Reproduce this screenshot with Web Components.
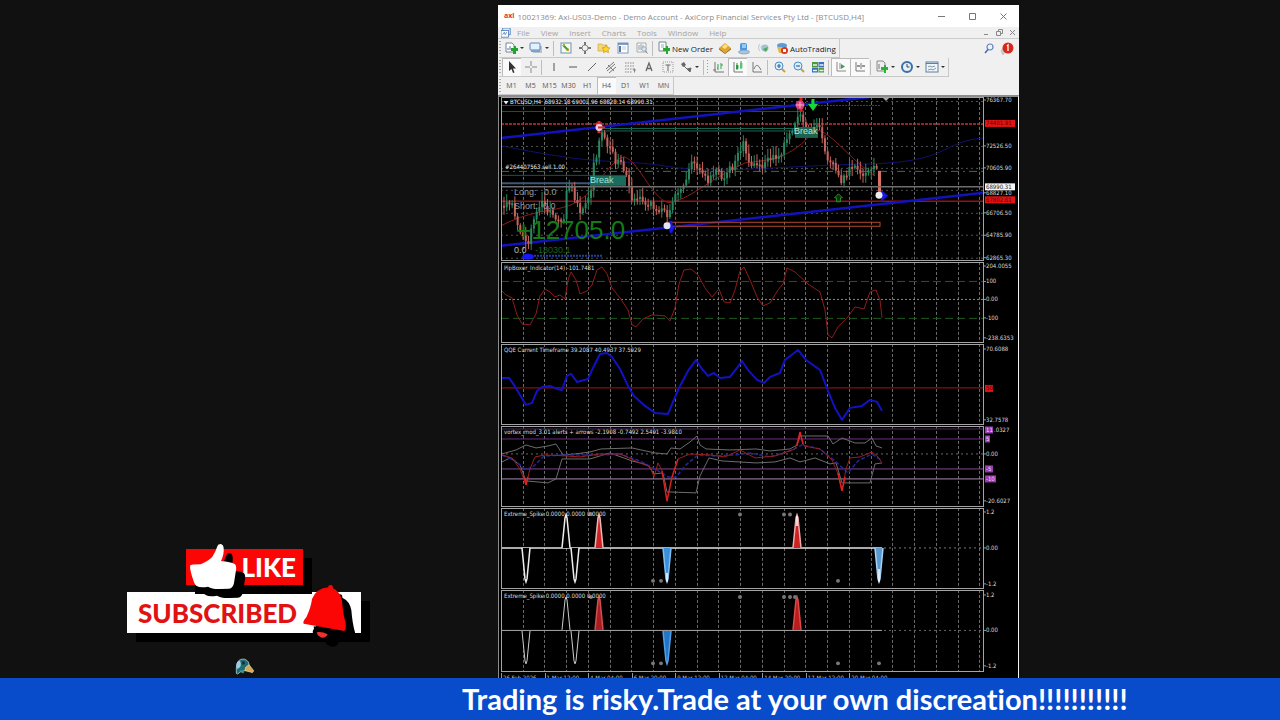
<!DOCTYPE html>
<html lang="en">
<head>
<meta charset="utf-8">
<title>Trading stream</title>
<style>
  html, body { margin: 0; height: 100%; background: #111; }
  body { font-family: "Open Sans", "Liberation Sans", sans-serif; overflow: hidden; }
</style>
</head>
<body>
<stream-stage></stream-stage>

<script>
/* ---------- toolbar icons, 12 x 12 ---------- */
const ICONS = {
  newchart: '<path d="M1 1h6l2 2v7H1z" fill="#fff" stroke="#789"/><path d="M3 6v2M5 4v4" stroke="#579"/><path d="M6 6h3V4h2v2h2v3h-2v3H8V9H6z" fill="#1fa52f"/>',
  profiles: '<rect x="3" y="4" width="9" height="7" fill="#b9c3cc"/><rect x="0" y="1" width="10" height="7" rx="1" fill="#e6f0fb" stroke="#5586c4"/><path d="M1 9h9" stroke="#7aa2d0" stroke-width="2"/>',
  market: '<rect x="1" y="1" width="10" height="10" fill="#f4f9ea" stroke="#6b93b8"/><path d="M3 3l5 5" stroke="#3b9b3b" stroke-width="2"/><path d="M6 9h3V6z" fill="#c99a30"/><path d="M3 3h2" stroke="#c99a30" stroke-width="2"/>',
  target: '<circle cx="6" cy="6" r="3" fill="none" stroke="#888"/><path d="M6 0v3M6 9v3M0 6h3M9 6h3" stroke="#777" stroke-width="2"/>',
  star: '<path d="M0 2h4l1 1h4v6H0z" fill="#f2d776" stroke="#c9a238" stroke-width=".6"/><path d="M8 3l1.300 2.500 2.700.4-2 1.900.5 2.900L8 9.500l-2.500 1.200.5-2.900-2-1.900 2.700-.4z" fill="#ffd42f" stroke="#b98a14" stroke-width=".6"/>',
  terminal: '<rect x="1" y="1" width="10" height="10" fill="#fff" stroke="#7b9cc8"/><path d="M1 2h10" stroke="#5b82b8" stroke-width="1.500"/><path d="M3 4v6" stroke="#346" stroke-width="1.500"/><path d="M5 5h4M5 7h4" stroke="#bcd"/>',
  tester: '<path d="M1 1h9v9H1z" fill="#f7f7f7" stroke="#aaa"/><path d="M3 3v5M5 2v6M7 3v3" stroke="#8c9cac"/><circle cx="8" cy="7" r="2.200" fill="#dde8f2" stroke="#9ab"/><path d="M9.500 9l2 2.500" stroke="#789"/>',
  order: '<path d="M1 0h7v9H1z" fill="#fff" stroke="#789"/><path d="M3 3h3M3 5h3" stroke="#9ab"/><path d="M5 6h3V4h2v2h2v3h-2v3H8V9H5z" fill="#27a836"/>',
  meta: '<path d="M6 1l6 5-6 5-6-5z" fill="#e2a52c"/><path d="M0 6l6 5 6-5v1.500L6 12 0 7.500z" fill="#9a6a10"/><path d="M3 5l3-3 3 2-3 3z" fill="#ffe08a"/>',
  hosting: '<rect x="2" y="1" width="7" height="8" rx="2" fill="#4f97dc"/><path d="M4 3h4M4 5h4" stroke="#dff"/><ellipse cx="6" cy="10" rx="5.500" ry="2" fill="#a9c4dd" stroke="#6d92b5" stroke-width=".6"/>',
  signal: '<path d="M3 2a5 5 0 0 0 0 7M5 3.500a3 3 0 0 0 0 4" fill="none" stroke="#b6c6d4"/><circle cx="8" cy="6" r="3.500" fill="#a3bfd0"/><path d="M6 7l3 3 2-5z" fill="#42ab55"/>',
  auto: '<ellipse cx="6" cy="3.500" rx="5" ry="2.500" fill="#5d9bd4"/><path d="M1 5h10l-2 6H3z" fill="#e5b84d"/><circle cx="8.500" cy="8.500" r="3.500" fill="#d8371e"/><rect x="7" y="7" width="3" height="3" fill="#fff"/>',
  search: '<circle cx="7" cy="4" r="3" fill="#eef4ff" stroke="#6480bc" stroke-width="1.200"/><path d="M5 6.500L2 10" stroke="#4468b0" stroke-width="1.500"/>',
  alert: '<path d="M-1 8l2-3 2 4-2 3z" fill="#ccc" stroke="#aaa" stroke-width=".5"/><circle cx="6" cy="5" r="5.500" fill="#d9281a"/><path d="M5 3l1-1v6" stroke="#fff" stroke-width="1.300" fill="none"/>',
  cursor: '<path d="M3 0v10l2.500-2 1.500 4 1.500-.6L7 7.500h3z" fill="#333"/>',
  cross: '<path d="M6 0v5M6 7v5M0 6h5M7 6h5" stroke="#888"/>',
  vline: '<path d="M6 2v8" stroke="#555"/>',
  hline: '<path d="M2 6h8" stroke="#555"/>',
  tline: '<path d="M2 10l8-8" stroke="#666"/>',
  channel: '<path d="M1 8l8-7M2 10l8-7M4 12l7-6M3 4l6 6" stroke="#777"/>',
  fibo: '<path d="M1 2h10M1 5h10M1 8h10M1 11h7" stroke="#888" stroke-dasharray="1.500 1"/><path d="M9 9h3M10.500 7.500v4" stroke="#888"/>',
  texta: '<path d="M3 10L6 2l3 8M4 7.500h4" fill="none" stroke="#666" stroke-width="1.300"/>',
  label: '<rect x="1" y="1" width="10" height="10" fill="none" stroke="#999" stroke-dasharray="1 1"/><path d="M3.500 4h5M6 4v6" stroke="#666"/>',
  shapes: '<path d="M1 3l3-2 2 3-3 2z" fill="#666"/><path d="M4 5l5 5M7 8l4-1-1 4z" fill="#666" stroke="#666"/>',
  bars: '<path d="M2 1v10h9M0 9h3" fill="none" stroke="#777"/><path d="M5 3v6M8 2v6M4 7h1M8 4h2" stroke="#38a04c"/>',
  candles: '<path d="M2 1v10h9" fill="none" stroke="#777"/><path d="M5 2v7M9 0v8" stroke="#2c9a40"/><rect x="4" y="4" width="2.400" height="4" fill="#2c9a40"/><rect x="8" y="2" width="2.400" height="5" fill="#5cc46c"/>',
  line: '<path d="M2 1v10h9" fill="none" stroke="#777"/><path d="M3 8c2-5 4-5 7 1" fill="none" stroke="#777"/>',
  zin: '<path d="M8 8l3 3" stroke="#c9a13c" stroke-width="2"/><circle cx="5" cy="5" r="4" fill="#dceefb" stroke="#4c8cc4"/><path d="M3 5h4M5 3v4" stroke="#2e6da8" stroke-width="1.200"/>',
  zout: '<path d="M8 8l3 3" stroke="#c9a13c" stroke-width="2"/><circle cx="5" cy="5" r="4" fill="#dceefb" stroke="#4c8cc4"/><path d="M3 5h4" stroke="#2e6da8" stroke-width="1.200"/>',
  tile: '<rect x="0" y="1" width="6" height="5" fill="#4c9a3b"/><rect x="6.500" y="1" width="5.500" height="5" fill="#386fc0"/><rect x="0" y="6.500" width="6" height="5" fill="#386fc0"/><rect x="6.500" y="6.500" width="5.500" height="5" fill="#4c9a3b"/><path d="M1 4h4M7.500 4h4M1 9.500h4M7.500 9.500h4" stroke="#e8f4e8" stroke-width="1.500"/>',
  scroll: '<path d="M2 1v9h9M5 2v6" fill="none" stroke="#888"/><path d="M6 3v5l4-2.500z" fill="#3f9e56"/>',
  shift: '<path d="M2 1v9h9M7 2v6" fill="none" stroke="#777"/><path d="M3 5h3M8 5h3" stroke="#777" stroke-width="1.500"/>',
  indic: '<path d="M1 0h6l2 2v8H1z" fill="#eee" stroke="#888"/><path d="M3 3v5" stroke="#777"/><path d="M5 6h3V4h2v2h2v3h-2v3H8V9H5z" fill="#27b336"/>',
  clock: '<circle cx="6" cy="6" r="5" fill="#e6f0fa" stroke="#3c6ea8" stroke-width="2"/><path d="M6 3v3h2.500" fill="none" stroke="#345"/>',
  templ: '<rect x="0" y="1" width="12" height="10" fill="#f1f6fa" stroke="#5e7f9f"/><path d="M0 2.500h12" stroke="#5e7f9f"/><path d="M2 6l2-1 2 1 3-1M2 9l3-1 2 1 3-2" stroke="#7b98a8" fill="none"/>',
  app: '<rect x="2" y="0" width="9" height="8" fill="#dbe9f8" stroke="#4b7cba"/><rect x="0" y="3" width="9" height="8" fill="#fff" stroke="#4b7cba"/><path d="M2 8l2-3 1 3 2-3" fill="none" stroke="#4b7cba"/>'
};

const define = (name, html, setup) => {
  customElements.define(name, class extends HTMLElement {
    constructor() {
      super();
      const t = document.createElement('template');
      t.innerHTML = html;
      this.attachShadow({ mode: 'open' }).append(t.content.cloneNode(true));
    }
    connectedCallback() { if (setup) setup(this, this.shadowRoot); }
  });
};

/* ---------- toolbar pieces ---------- */
define('tool-button', `
<style>
  :host { display: flex; flex: none; }
  button { all: unset; box-sizing: border-box; display: flex; align-items: center; justify-content: center; gap: 2px;
    width: 19px; color: #222; font: 8px "Open Sans", sans-serif; white-space: nowrap; }
  :host([menu]) button { width: 25px; gap: 3px; }
  :host([wide]) button { width: auto; padding: 0 3px; }
  :host([pressed]) button { background: #fafafa; box-shadow: inset 1px 1px 0 #bbb; }
  :host([period]) button { color: #555; font-size: 7px; }
  svg { width: 12px; height: 12px; flex: none; overflow: visible; }
  i { display: none; border: 2px solid transparent; border-top-color: #333; border-bottom: 0; }
  :host([menu]) i { display: block; }
</style>
<button type="button"><svg viewBox="0 0 12 12" fill="none" aria-hidden="true"></svg><slot></slot><i></i></button>`,
(el, root) => {
  const icon = el.getAttribute('icon'), svg = root.querySelector('svg');
  if (icon) { svg.innerHTML = ICONS[icon]; root.querySelector('button').title = icon; } else svg.remove();
});

define('tool-row', `
<style>
  :host { display: flex; align-items: stretch; box-sizing: border-box; height: 19px; padding-left: 1px; }
  :host([short]) { height: 18px; }
  .bar { display: flex; border-right: 1px solid #c8c8c8; border-bottom: 1px solid #c8c8c8; }
  .bar::before { content: ""; width: 2px; margin: 2px 1px 2px 0; background: repeating-linear-gradient(#aaa 0 1px, #f0f0f0 1px 3px); }
  .end { display: flex; margin-left: auto; padding-right: 2px; }
  ::slotted(hr) { width: 1px; margin: 2px 2px 1px 1px; border: 0; background: #bdbdbd; }
  ::slotted(hr.grip) { margin-right: 1px; background: repeating-linear-gradient(#999 0 1px, #f0f0f0 1px 3px); }
</style>
<div class="bar"><slot></slot></div><div class="end"><slot name="end"></slot></div>`);

define('title-bar', `
<style>
  :host { display: flex; align-items: center; height: 22px; background: #fff; color: #8c8c8c; font-size: 8px; }
  b { margin: 0 3px 0 6px; color: #d8342c; font-size: 7px; line-height: 8px; }
  span { flex: 1; white-space: nowrap; overflow: hidden; }
  button { all: unset; width: 31px; height: 22px; display: grid; place-items: center; }
  svg { width: 9px; height: 9px; fill: none; stroke: #777; }
</style>
<b>axi</b><span><slot></slot></span>
<button aria-label="Minimize"><svg viewBox="0 0 9 9"><path d="M1 4.500h7"/></svg></button>
<button aria-label="Maximize"><svg viewBox="0 0 9 9"><path d="M1.500 1.500h6v6h-6z"/></svg></button>
<button aria-label="Close"><svg viewBox="0 0 9 9"><path d="M1.500 1.500l6 6M7.500 1.500l-6 6"/></svg></button>`);

define('menu-bar', `
<style>
  :host { display: flex; align-items: center; height: 12px; background: #f0f0f0; border-bottom: 1px solid #ccc; box-sizing: border-box;
    color: #a4a4a4; font-size: 8px; line-height: 9px; }
  svg.app { width: 10px; height: 10px; margin: 0 6px 0 3px; }
  nav { display: flex; gap: 11px; flex: 1; }
  a { color: inherit; text-decoration: none; }
  button { all: unset; width: 13px; height: 11px; display: grid; place-items: center; }
  button svg { width: 7px; height: 7px; fill: none; stroke: #888; }
</style>
<svg class="app" viewBox="0 0 12 12">${ICONS.app}</svg>
<nav><a href="#file">File</a><a href="#view">View</a><a href="#insert">Insert</a><a href="#charts">Charts</a><a href="#tools">Tools</a><a href="#window">Window</a><a href="#help">Help</a></nav>
<button aria-label="Minimize chart"><svg viewBox="0 0 7 7"><path d="M1 5.500h4"/></svg></button>
<button aria-label="Restore chart"><svg viewBox="0 0 7 7"><path d="M.5 2.500h4v4h-4zM2.500 2V.5h4v4H5"/></svg></button>
<button aria-label="Close chart"><svg viewBox="0 0 7 7"><path d="M1 1l5 5M6 1L1 6"/></svg></button>`);

/* ---------- charts ---------- */
const LEFT = 501, RIGHT = 984;
const poly = (pts, color, w = 1, extra = '') =>
  `<polyline points="${pts}" fill="none" stroke="${color}" stroke-width="${w}" stroke-linejoin="round" ${extra}/>`;
const row = (y, color, w = 1, dash = '', x1 = LEFT, x2 = RIGHT) =>
  `<path d="M${x1} ${y}H${x2}" stroke="${color}" stroke-width="${w}" ${dash && `stroke-dasharray="${dash}"`}/>`;
const columns = (y1, y2) => {
  let s = '';
  for (let i = 0; i < 22; i++) s += `<path d="M${Math.floor(523 + i * 21.75) + .5} ${y1}V${y2}" stroke="#6a6a6a" stroke-dasharray="3 2"/>`;
  return s;
};

const closes = [[501,208],[506,202],[512,206],[517,226],[522,236],[527,247],[532,220],[537,206],[541,201],[546,214],[550,212],[556,218],[562,226],[566,190],[569,182],[573,196],[577,208],[580,214],[586,200],[590,194],[593,162],[597,155],[599,131],[603,140],[606,143],[611,148],[614,166],[618,161],[622,168],[626,180],[630,198],[636,196],[642,202],[650,205],[656,210],[662,207],[667,218],[671,206],[677,190],[683,184],[688,170],[692,162],[696,166],[700,173],[708,182],[712,172],[716,170],[721,180],[726,170],[732,167],[736,156],[742,143],[746,158],[750,165],[760,166],[768,160],[780,155],[786,136],[792,128],[799,113],[803,126],[812,129],[818,126],[823,148],[828,161],[834,167],[839,183],[845,175],[852,165],[858,171],[862,179],[868,170],[873,169],[878,171]];
const priceAt = x => {
  for (let i = 1; i < closes.length; i++) if (x <= closes[i][0]) {
    const [a, b] = closes[i - 1], [c, d] = closes[i];
    return b + (d - b) * (x - a) / (c - a);
  }
  return 171;
};
const candles = () => {
  let s = '', prev = 206, n = 7;
  for (let x = 503; x <= 877; x += 2.72) {
    n = (n * 73 + 41) % 101;
    const y = priceAt(x) + (n % 7 - 3), up = y < prev;
    const top = Math.min(y, prev), h = Math.max(2, Math.abs(y - prev)), c = up ? '#2a8860' : '#c4645c';
    s += `<path d="M${x + 1} ${top - 2 - n % 8}V${top + h + 2 + n % 6}" stroke="${c}" stroke-width="1"/><rect x="${x}" y="${top}" width="2" height="${h}" fill="${c}"/>`;
    prev = y;
  }
  return s + '<rect x="878" y="171" width="3" height="21" fill="#d87068"/>';
};
const spike = (x, base, tip, color, fill, w = 1.5) =>
  `<path d="M${x - 4} ${base}L${x - 1} ${tip + Math.sign(base - tip) * 3}L${x} ${tip}L${x + 1} ${tip + Math.sign(base - tip) * 3}L${x + 4} ${base}" fill="${fill}" stroke="${color}" stroke-width="${w}"/>`;
const dots = list => list.map(([x, y]) => `<circle cx="${x}" cy="${y}" r="2" fill="#777"/>`).join('');

const PANES = {
  price: {
    y: 97, h: 164,
    draw: () => [101, 146, 168, 190, 213, 235, 258].map(y => row(y + .5, '#505050', 1, '2 3')).join('') + columns(97, 261)
      + row(105.5, '#145448', 1, '', 501, 798) + row(111.5, '#145448', 1, '', 501, 800)
      + row(105.5, '#8b2424', 1, '2 1', 806, 880)
      + row(124, '#c83030', 1.500, '3 1') + row(128.5, '#1c6a56', 1, '', 601, 800) + row(131, '#1c6a56', 1, '', 601, 800)
      + row(171.5, '#3f7040', 1, '8 4 2 4') + row(175.5, '#1a5448', 1, '', 501, 626)
      + row(183.5, '#3c5878', 2, '', 501, 626) + row(201.5, '#8f1515', 1.500)
      + '<path d="M501 146C540 153 570 160 620 162S670 170 715 170S790 166 870 164S940 142 984 138" fill="none" stroke="#11116c"/>'
      + '<path d="M501 226C540 206 560 214 580 200C598 188 610 160 624 157C638 160 650 196 668 203C690 200 705 182 745 163C770 160 790 160 815 130C830 130 848 158 875 176" fill="none" stroke="#8c1a1a"/>'
      + '<path d="M501 138L870 97M501 246L984 193" stroke="#1212bc" stroke-width="2.500"/>'
      + candles() + row(187, '#6e6e6e', 1.500)
      + '<rect x="667" y="222.500" width="213" height="4" fill="none" stroke="#b5482e"/>'
      + '<rect x="590" y="176" width="36" height="10" fill="#1b6c5c"/><rect x="795" y="127" width="23" height="11" fill="#1b6450"/>'
      + '<path d="M599 121v12M596 124h6" stroke="#ee2222" stroke-width="3"/><circle cx="599" cy="127.500" r="3.500" fill="#dcd0e8"/><path d="M598 127.500h7" stroke="#ee2222" stroke-width="2"/>'
      + '<path d="M671 221v12" stroke="#1818f0" stroke-width="3"/><path d="M668 228l8-2-4 6z" fill="#1818f0"/><circle cx="667" cy="226" r="3.500" fill="#e4e4f4"/>'
      + '<path d="M801 98v14" stroke="#e01818" stroke-width="3"/><circle cx="800" cy="105" r="4.500" fill="#d8407a"/><path d="M796 105h8M800 102v6" stroke="#f8b0c8"/>'
      + '<path d="M813 99v7" stroke="#18d838" stroke-width="3"/><path d="M808 104h10l-5 7z" fill="#18d838"/>'
      + '<path d="M838.500 194l4 4h-2v4h-4v-4h-2z" fill="#081" fill-opacity=".4" stroke="#2a8a20"/>'
      + '<path d="M881 190l7 6-7 6z" fill="#1818e8"/><circle cx="879" cy="195.500" r="3.500" fill="#eee"/>'
      + '<path d="M882 97h8l-4 4z" fill="#aaa"/><path d="M503.500 101h5l-2.500 3.500z" fill="#eee"/>'
      + '<ellipse cx="528" cy="257" rx="6" ry="3" fill="#1818f0"/>' + row(256, '#2040a0', 2, '2 1', 534, 602),
    labels: [
      [9, 1, 6, '#eee', 'BTCUSD,H4&nbsp; 68932.18 69002.96 68828.14 68990.31'],
      [4, 66, 6, '#eee', '#264407563 sell 1.00'],
      [89, 78, 9, '#a8e0d4', 'Break'], [293, 29, 9, '#b8e4da', 'Break'],
      [13, 90, 9, '#9a9a9a', 'Long:&nbsp;&nbsp; 0.0'], [13, 104, 9, '#9a9a9a', 'Short:&nbsp; 0.0'],
      [15, 118, 26, '#157a15', '+12705.0'], [34, 148, 9, '#176317', '-18030.1'], [13, 148, 9, '#bbb', '0.0']],
    axis: [[100, '76367.70'], [123.5, '74401.91', 'red'], [146, '72526.50'], [168, '70605.90'], [193, '68827.10'],
      [187, '68990.31', 'white'], [200, '67802.61', 'red'], [213, '66706.50'], [235.5, '64785.90'], [258, '62865.30']]
  },
  pip: {
    y: 262, h: 81,
    draw: () => columns(262, 343) + row(281.5, '#1d5a1d', 1, '8 4') + row(318.5, '#1d5a1d', 1, '8 4') + row(299.5, '#8a8a8a', 1, '2 2')
      + poly('501,290 506,295 512,298 517,315 522,324 530,325 536,314 540,296 545,289 550,292 555,297 560,295 565,299 568,280 571,272 576,280 580,294 587,291 592,285 597,270 602,267 607,274 612,288 620,298 628,310 632,325 636,327 643,319 652,315 665,316 670,321 675,308 679,284 684,270 691,269 698,275 705,288 712,297 719,289 724,302 730,303 735,290 740,271 744,267 750,280 757,297 763,306 770,303 778,290 783,284 787,268 795,272 808,284 820,292 825,310 828,335 832,338 838,327 848,317 855,307 864,309 870,292 876,290 880,300 882,318', '#8e1c1c'),
    labels: [[3, 2, 6, '#ddd', 'PipBoxer_Indicator(14) -101.7481']],
    axis: [[266, '204.0055'], [281.5, '100'], [299.5, '0.00'], [318, '-100'], [338, '-238.6353']]
  },
  qqe: {
    y: 344, h: 82,
    draw: () => columns(344, 426) + row(388, '#a01818')
      + poly('501,378 509,378 514,385 520,395 526,405 532,403 537,391 542,387 550,386 557,389 562,390 567,376 571,374 577,382 588,379 593,368 600,354 607,353 612,357 620,369 628,386 634,396 645,406 655,413 668,414 673,402 679,388 688,371 696,360 702,369 708,376 714,373 720,378 730,377 737,368 742,361 748,370 757,380 764,383 770,377 780,373 785,360 798,350 806,360 820,370 828,391 835,408 842,420 850,408 862,406 870,400 877,402 882,411', '#1212c4', 2),
    labels: [[3, 2, 6, '#ddd', 'QQE Current Timeframe 39.2087 40.4937 37.5929']],
    axis: [[349, '70.6088'], [388.5, '50', 'red'], [420, '32.7578']]
  },
  vortex: {
    y: 427, h: 81,
    draw: () => columns(427, 508) + row(455, '#666', 1, '2 3') + row(430, '#4c2a58') + row(440, '#6a2f7a') + row(470, '#7c4a8e') + row(480, '#a98bb4')
      + poly('502,455 516,451 526,446 536,449 548,447 556,445 563,456 575,455 590,453 601,450 632,449 655,454 667,455 671,449 680,450 690,443 697,437 700,446 706,450 730,451 756,450 770,452 790,450 797,446 800,437 828,437 833,445 842,439 855,444 865,444 872,439 876,447 882,449', '#6c6c6c')
      + poly('502,463 510,459 520,466 526,482 548,484 556,480 562,460 575,460 590,460 610,454 632,462 648,466 654,475 663,474 667,493 696,494 700,477 709,459 722,462 756,464 775,463 790,459 800,463 815,459 830,465 836,464 842,484 870,484 875,465 882,464', '#6c6c6c')
      + poly('502,456 514,461 526,471 534,467 544,457 566,456 600,456 620,455 640,462 655,470 668,478 676,478 686,466 698,456 715,457 735,456 750,454 770,458 790,452 802,446 820,450 835,462 848,474 858,462 872,455 882,462', '#24249a', 1.500, 'stroke-dasharray="4 2"')
      + poly('502,456 512,459 520,470 526,486 530,470 535,458 545,456 566,457 580,458 600,455 620,455 640,464 650,468 654,478 658,464 662,472', '#a02020')
      + poly('662,472 667,502 672,478 678,460', '#d82222', 1.500)
      + poly('678,460 690,455 710,456 725,458 740,451 755,459 775,457 795,450 800,434 804,447 820,450 832,461 838,475 842,492 846,470 850,459 860,458 872,453 878,458 882,464', '#981e1e')
      + '<path d="M524 478l2 8 2-8M797 447l3-14 3 12M838 474l4 18 3-14" fill="none" stroke="#e02222" stroke-width="1.500"/>',
    labels: [[3, 2, 6, '#ddd', 'vortex_mod_3.01 alerts + arrows -2.1908 -0.7492 2.5491 -3.9810']],
    axis: [[431, '11', 'purple'], [431, '.0327', '', 10], [440, '5', 'purple'], [455, '0.00'], [470, '-5', 'purple'], [480, '-10', 'purple'], [502, '-20.6027']]
  },
  spike1: {
    y: 509, h: 81,
    draw: () => columns(509, 590) + row(549, '#e4e4e4', 1.500, '', 501, 882) + row(549, '#777', 1, '2 3', 884, 984)
      + spike(566, 549, 516, '#eee', '#000') + spike(599, 549, 516, '#e8b8b8', '#c22') + spike(797, 549, 516, '#eaa', '#c22')
      + spike(526, 549, 583, '#eee', '#000') + spike(575, 549, 583, '#eee', '#000')
      + spike(667, 549, 583, '#7fc0f0', '#3c8fdc') + spike(879, 549, 583, '#a8d4f4', '#5a9ad0')
      + '<path d="M667 574v9M879 570v13M797 517v10" stroke="#fff" stroke-width="1.500"/>'
      + dots([[740, 515.5], [784, 515.5], [790, 515.5], [591, 515], [653, 582], [661, 582], [838, 582]]),
    labels: [[3, 2, 6, '#ddd', 'Extreme_Spike 0.0000 0.0000 0.0000']],
    axis: [[513, '1.2'], [549, '0.00'], [585, '-1.2']]
  },
  spike2: {
    y: 591, h: 82,
    draw: () => columns(591, 673) + row(631.5, '#a8a8a8', 1, '', 501, 882) + row(631.5, '#666', 1, '2 3', 884, 984)
      + spike(566, 631, 598, '#ccc', '#000', 1) + spike(599, 631, 598, '#d05050', '#a81c24') + spike(797, 631, 598, '#e04848', '#b81c1c')
      + spike(526, 632, 665, '#ccc', '#000', 1) + spike(575, 632, 665, '#ccc', '#000', 1) + spike(667, 632, 665, '#4fa0e8', '#2474c4')
      + dots([[740, 598], [784, 598], [790, 598], [795, 598], [591, 598], [653, 664.5], [661, 664.5], [838, 664.5], [879, 664.5]]),
    labels: [[3, 2, 6, '#ddd', 'Extreme_Spike 0.0000 0.0000 0.0000']],
    axis: [[596, '1.2'], [631.5, '0.00'], [667, '-1.2']]
  }
};
const TAG = { red: ['#e01414', '#600'], white: ['#f4f4f4', '#222'], purple: ['#9a3cb4', '#f0d8ff'] };

define('chart-pane', `
<style>
  :host { display: grid; grid-template-columns: minmax(0, 1fr) 34px; min-height: 0; background: #000;
    font-family: "DejaVu Sans Condensed", "DejaVu Sans", sans-serif; }
  .plot { position: relative; overflow: hidden; background: #000; }
  .plot::after { content: ""; position: absolute; inset: 0; border: 1px solid #a4a4a4; }
  svg { display: block; width: 100%; height: 100%; min-height: 0; overflow: hidden; }
  .label { position: absolute; white-space: nowrap; line-height: 1.2; }
  .label.large { font-family: "Liberation Sans", sans-serif; }
  text { font-size: 6px; fill: #dcdcdc; }
</style>
<div class="plot"><svg class="lines" preserveAspectRatio="none"></svg></div><svg class="axis" preserveAspectRatio="none"></svg>`,
(el, root) => {
  const p = PANES[el.getAttribute('name')], lines = root.querySelector('.lines'), axis = root.querySelector('.axis');
  lines.setAttribute('viewBox', `${LEFT} ${p.y} ${RIGHT - LEFT} ${p.h}`);
  lines.innerHTML = p.draw();
  axis.setAttribute('viewBox', `0 ${p.y} 34 ${p.h}`);
  axis.innerHTML = p.axis.map(([y, t, tag, x = 2]) => {
    const [bg, fg] = TAG[tag] || [];
    const w = t.length > 4 ? 30 : t.length * 3 + 2;
    return (bg ? `<rect x="1" y="${y - 3.5}" width="${w}" height="7" fill="${bg}"/>` : x > 2 ? '' : `<path d="M0 ${y}h2" stroke="#999"/>`)
      + `<text x="${x}" y="${y + 2}"${fg ? ` style="fill:${fg}"` : ''}>${t}</text>`;
  }).join('');
  const plot = root.querySelector('.plot');
  for (const [x, y, size, color, text] of p.labels) {
    const s = document.createElement('span');
    s.className = size > 6 ? 'label large' : 'label';
    s.style.cssText = `left:${x}px;top:${y}px;font-size:${size}px;color:${color}`;
    s.innerHTML = text;
    plot.append(s);
  }
});

define('time-axis', `
<style>
  :host { display: grid; grid-template-columns: repeat(11, minmax(0, 43.5fr)) 38px; height: 5px; overflow: hidden; background: #000; color: #c8c8c8;
    font: 6px/7px "DejaVu Sans Condensed", sans-serif; }
  span { white-space: nowrap; padding: 1px 0 0 1px; border-left: 1px solid #999; }
</style>
<span>26 Feb 2026</span><span>1 Mar 12:00</span><span>4 Mar 04:00</span><span>6 Mar 20:00</span><span>9 Mar 12:00</span><span>12 Mar 04:00</span><span>14 Mar 20:00</span><span>17 Mar 12:00</span><span>20 Mar 04:00</span>`);

define('trading-window', `
<style>
  :host { display: flex; flex-direction: column; min-width: 0; min-height: 0; overflow: hidden; background: #f0f0f0; }
  .charts { flex: 1; min-height: 0; display: grid; grid-template-rows: 164fr 81fr 82fr 81fr 81fr 82fr 5px; row-gap: 1px;
    background: #000; border: solid #8c8c8c; border-width: 2px 0 0 1px; padding-left: 2px; border-right: 1px solid #f4f4f4; }
  .charts > * { min-width: 0; min-height: 0; }
</style>
<title-bar>10021369: Axi-US03-Demo - Demo Account - AxiCorp Financial Services Pty Ltd - [BTCUSD,H4]</title-bar>
<menu-bar></menu-bar>
<tool-row>
  <tool-button icon="newchart" menu></tool-button><tool-button icon="profiles" menu></tool-button><hr>
  <tool-button icon="market"></tool-button><tool-button icon="target"></tool-button><tool-button icon="star"></tool-button><tool-button icon="terminal"></tool-button><tool-button icon="tester"></tool-button><hr>
  <tool-button icon="order" wide>New Order</tool-button><tool-button icon="meta"></tool-button><tool-button icon="hosting"></tool-button><tool-button icon="signal"></tool-button>
  <tool-button icon="auto" wide>AutoTrading</tool-button>
  <tool-button slot="end" icon="search"></tool-button><tool-button slot="end" icon="alert"></tool-button>
</tool-row>
<tool-row>
  <tool-button icon="cursor" pressed></tool-button><tool-button icon="cross"></tool-button><hr>
  <tool-button icon="vline"></tool-button><tool-button icon="hline"></tool-button><tool-button icon="tline"></tool-button><tool-button icon="channel"></tool-button><tool-button icon="fibo"></tool-button><tool-button icon="texta"></tool-button><tool-button icon="label"></tool-button><tool-button icon="shapes" menu></tool-button><hr><hr class="grip">
  <tool-button icon="bars"></tool-button><tool-button icon="candles" pressed></tool-button><tool-button icon="line"></tool-button><hr>
  <tool-button icon="zin"></tool-button><tool-button icon="zout"></tool-button><tool-button icon="tile"></tool-button><hr>
  <tool-button icon="scroll" pressed></tool-button><tool-button icon="shift" pressed></tool-button><hr>
  <tool-button icon="indic" menu></tool-button><tool-button icon="clock" menu></tool-button><tool-button icon="templ" menu></tool-button>
</tool-row>
<tool-row short>
  <tool-button period>M1</tool-button><tool-button period>M5</tool-button><tool-button period>M15</tool-button><tool-button period>M30</tool-button><tool-button period>H1</tool-button><tool-button period pressed>H4</tool-button><tool-button period>D1</tool-button><tool-button period>W1</tool-button><tool-button period>MN</tool-button>
</tool-row>
<div class="charts">
  <chart-pane name="price"></chart-pane><chart-pane name="pip"></chart-pane><chart-pane name="qqe"></chart-pane>
  <chart-pane name="vortex"></chart-pane><chart-pane name="spike1"></chart-pane><chart-pane name="spike2"></chart-pane>
  <time-axis></time-axis>
</div>`);

/* ---------- stickers and ticker ---------- */
define('like-sticker', `
<style>
  :host { display: flex; flex-direction: column; align-items: center; gap: 7px; font-family: Lato, sans-serif; }
  button { all: unset; box-sizing: border-box; position: relative; display: flex; align-items: center; font-weight: 900; box-shadow: 9px 9px 0 #000; }
  .like { z-index: 1; width: 117px; height: 36px; padding-left: 56px; background: #fb0505; color: #fff; font-size: 26px; }
  .sub { width: 234px; height: 41px; padding-left: 11px; background: #fff; color: #e01212; font-size: 26px; }
  svg { position: absolute; overflow: visible; }
  .thumb { left: 4px; top: -5px; width: 56px; height: 56px; }
  .bell { left: 176px; top: -8px; width: 56px; height: 64px; }
  .duck { position: static; width: 19px; height: 17px; margin-top: 18px; }
</style>
<button class="like" type="button"><svg class="thumb" viewBox="208 25 168 168" aria-hidden="true">
  <path transform="translate(27 27)" d="M208 90Q210 86 240 86Q268 74 276 62Q286 46 290 32Q292 25 300 25Q308 26 309 38Q311 55 301 76Q330 78 343 86Q349 92 345 110L340 142Q337 158 325 159L298 160Q275 161 262 153Q240 158 228 151Q222 148 218 134Q208 105 208 90Z"/>
  <path fill="#fff" d="M208 90Q210 86 240 86Q268 74 276 62Q286 46 290 32Q292 25 300 25Q308 26 309 38Q311 55 301 76Q330 78 343 86Q349 92 345 110L340 142Q337 158 325 159L298 160Q275 161 262 153Q240 158 228 151Q222 148 218 134Q208 105 208 90Z"/></svg>LIKE</button>
<button class="sub" type="button">SUBSCRIBED<svg class="bell" viewBox="550 145 168 192" aria-hidden="true">
  <path transform="translate(28 28)" d="M626 155Q625 148 633 148Q641 149 640 158Q662 168 667 195Q670 235 678 262Q680 280 674 286L552 264Q548 258 560 245Q574 215 577 190Q590 158 626 155Z"/>
  <path d="M582 272L640 283Q638 312 610 310Q582 304 582 272ZM606 293L662 303Q660 334 636 333Q610 328 606 293Z"/>
  <path fill="#fb0505" d="M626 155Q625 148 633 148Q641 149 640 158Q662 168 667 195Q670 235 678 262Q680 280 674 286L552 264Q548 258 560 245Q574 215 577 190Q590 158 626 155Z"/>
  <path fill="#f23030" d="M591 290Q606 287 624 296Q619 307 607 306Q594 303 591 290Z"/></svg></button>
<svg class="duck" viewBox="0 0 57 51" aria-hidden="true"><path d="M4 46Q2 12 14 6Q30-2 40 12Q44 20 42 26L30 38Q14 40 8 48Z" fill="#1f6e72" stroke="#d8e8e8" stroke-width="2"/><path d="M4 22Q4 10 14 8Q20 14 16 26Q10 34 5 32Z" fill="#9ccbe6"/><circle cx="25" cy="15" r="5" fill="#134"/><path d="M32 28L42 20L56 38Q54 47 46 42L30 38Z" fill="#d7a850" stroke="#f0e0c0" stroke-width="2"/><path d="M16 38L26 44" stroke="#3c9aa0" stroke-width="5"/></svg>`);

define('risk-banner', `
<style>
  :host { display: block; box-sizing: border-box; height: 42px; padding-left: 36.1%; background: #084bcb; color: #fff; overflow: hidden; }
  p { margin: 0; font: 700 29px/42px Lato, sans-serif; font-variant-ligatures: none; white-space: nowrap; }
</style>
<p><slot></slot></p>`);

define('stream-stage', `
<style>
  :host { display: grid; grid-template-rows: minmax(0, 1fr) auto; height: 100vh; background: #111; }
  main { display: grid; grid-template-columns: minmax(0, 498fr) minmax(0, 521fr) minmax(0, 261fr); min-height: 0; }
  aside { display: flex; flex-direction: column; justify-content: flex-end; padding: 0 10px 3px 0; }
  trading-window { margin-top: 5px; }
</style>
<main><aside><like-sticker></like-sticker></aside><trading-window></trading-window></main>
<risk-banner>Trading is risky.Trade at your own discreation!!!!!!!!!!!</risk-banner>`);
</script>
</body>
</html>
